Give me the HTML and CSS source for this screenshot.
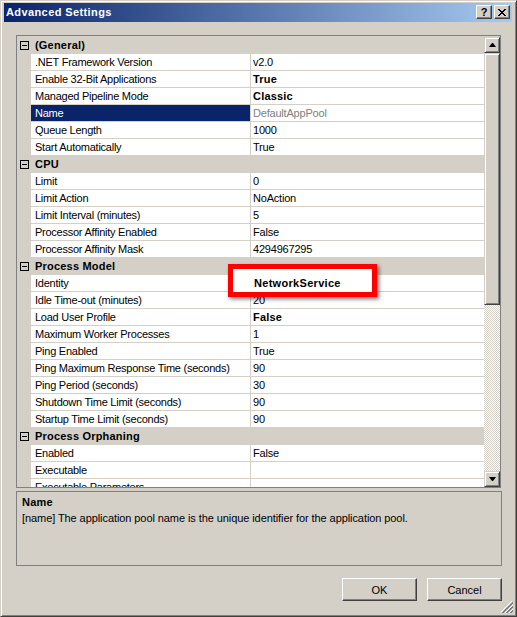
FILE: index.html
```html
<!DOCTYPE html>
<html lang="en">
<head>
    <meta charset="UTF-8">
    <meta name="viewport" content="width=device-width, initial-scale=1.0">
    <title>Advanced Settings</title>
    <link rel="stylesheet" href="styles.css">
</head>
<body>
<div class="window">
    <div class="titlebar">
        <span class="caption">Advanced Settings</span>
        <div class="capbtns">
            <button class="capbtn">?</button>
            <button class="capbtn">
                <svg width="8" height="7" viewBox="0 0 8 7">
                    <path d="M0 0h2v1h-2zM6 0h2v1h-2zM1 1h2v1h-2zM5 1h2v1h-2zM2 2h4v1h-4zM3 3h2v1h-2zM2 4h4v1h-4zM1 5h2v1h-2zM5 5h2v1h-2zM0 6h2v1h-2zM6 6h2v1h-2z" fill="#000"/>
                </svg>
            </button>
        </div>
    </div>

    <div class="client">
        <div class="propgrid">
            <div class="rows">
                <div class="row cat"><div class="gut"><span class="minus"></span></div><div class="name">(General)</div></div>
                <div class="row"><div class="gut"></div><div class="key">.NET Framework Version</div><div class="val">v2.0</div></div>
                <div class="row"><div class="gut"></div><div class="key">Enable 32-Bit Applications</div><div class="val b">True</div></div>
                <div class="row"><div class="gut"></div><div class="key">Managed Pipeline Mode</div><div class="val b">Classic</div></div>
                <div class="row sel"><div class="gut"></div><div class="key">Name</div><div class="val">DefaultAppPool</div></div>
                <div class="row"><div class="gut"></div><div class="key">Queue Length</div><div class="val">1000</div></div>
                <div class="row"><div class="gut"></div><div class="key">Start Automatically</div><div class="val">True</div></div>

                <div class="row cat"><div class="gut"><span class="minus"></span></div><div class="name">CPU</div></div>
                <div class="row"><div class="gut"></div><div class="key">Limit</div><div class="val">0</div></div>
                <div class="row"><div class="gut"></div><div class="key">Limit Action</div><div class="val">NoAction</div></div>
                <div class="row"><div class="gut"></div><div class="key">Limit Interval (minutes)</div><div class="val">5</div></div>
                <div class="row"><div class="gut"></div><div class="key">Processor Affinity Enabled</div><div class="val">False</div></div>
                <div class="row"><div class="gut"></div><div class="key">Processor Affinity Mask</div><div class="val">4294967295</div></div>

                <div class="row cat"><div class="gut"><span class="minus"></span></div><div class="name">Process Model</div></div>
                <!-- the Identity value is shown by the red callout below -->
                <div class="row"><div class="gut"></div><div class="key">Identity</div><div class="val b"></div></div>
                <div class="row"><div class="gut"></div><div class="key">Idle Time-out (minutes)</div><div class="val">20</div></div>
                <div class="row"><div class="gut"></div><div class="key">Load User Profile</div><div class="val b">False</div></div>
                <div class="row"><div class="gut"></div><div class="key">Maximum Worker Processes</div><div class="val">1</div></div>
                <div class="row"><div class="gut"></div><div class="key">Ping Enabled</div><div class="val">True</div></div>
                <div class="row"><div class="gut"></div><div class="key">Ping Maximum Response Time (seconds)</div><div class="val">90</div></div>
                <div class="row"><div class="gut"></div><div class="key">Ping Period (seconds)</div><div class="val">30</div></div>
                <div class="row"><div class="gut"></div><div class="key">Shutdown Time Limit (seconds)</div><div class="val">90</div></div>
                <div class="row"><div class="gut"></div><div class="key">Startup Time Limit (seconds)</div><div class="val">90</div></div>

                <div class="row cat"><div class="gut"><span class="minus"></span></div><div class="name">Process Orphaning</div></div>
                <div class="row"><div class="gut"></div><div class="key">Enabled</div><div class="val">False</div></div>
                <div class="row"><div class="gut"></div><div class="key">Executable</div><div class="val"></div></div>
                <div class="row"><div class="gut"></div><div class="key">Executable Parameters</div><div class="val"></div></div>
            </div>

            <div class="vscroll">
                <div class="sbtn"><span class="arrow-up"></span></div>
                <div class="thumb"></div>
                <div class="track"></div>
                <div class="sbtn"><span class="arrow-down"></span></div>
            </div>
        </div>

        <div class="desc">
            <div class="desc-title">Name</div>
            <div>[name] The application pool name is the unique identifier for the application pool.</div>
        </div>

        <div class="buttons">
            <button class="btn">OK</button>
            <button class="btn">Cancel</button>
        </div>
    </div>

    <!-- red callout drawn over the Identity row -->
    <div class="highlight">NetworkService</div>

    <svg class="grip" width="12" height="12" viewBox="0 0 12 12">
        <path d="M11 0L0 11M12 4L4 12M12 8L8 12" stroke="#fff" shape-rendering="crispEdges"/>
        <path d="M12 1L1 12M12 2L2 12M12 5L5 12M12 6L6 12M12 9L9 12M12 10L10 12" stroke="#808080" shape-rendering="crispEdges"/>
    </svg>
</div>
</body>
</html>
```

FILE: styles.css
```css
body {
    margin: 0;
    background-color: #d4d0c8;
    font-family: "Liberation Sans", Arial, sans-serif;
    font-size: 11px;
    color: #000;
}

.window {
    position: relative;
    width: 517px;
    height: 617px;
    box-sizing: border-box;
    border: 1px solid;
    border-color: #d4d0c8 #404040 #404040 #d4d0c8;
    box-shadow: inset 1px 1px #fff, inset -1px -1px #808080;
    padding: 2px 4px 0 3px;
}

/* title bar */
.titlebar {
    height: 19px;
    display: flex;
    justify-content: space-between;
    background: linear-gradient(to right, #0a246a, #a6caf0);
}

.caption {
    color: #fff;
    font-weight: bold;
    line-height: 19px;
    padding-left: 2px;
    letter-spacing: 0.4px;
}

.capbtns {
    display: flex;
    gap: 2px;
    margin: 2px 2px 0 0;
}

.capbtn {
    width: 16px;
    height: 14px;
    padding: 0;
    background-color: #d4d0c8;
    border: 1px solid;
    border-color: #fff #404040 #404040 #fff;
    box-shadow: inset -1px -1px #808080;
    font-family: "Liberation Sans", Arial, sans-serif;
    font-size: 11px;
    font-weight: bold;
    line-height: 11px;
    display: flex;
    align-items: center;
    justify-content: center;
}

.client {
    padding: 13px 0 0 12px;
}

/* property grid */
.propgrid {
    width: 485px;
    height: 453px;
    box-sizing: border-box;
    border: 1px solid #808080;
    padding-top: 1px;
    display: flex;
    background-color: #d4d0c8;
}

.rows {
    flex: 1;
    overflow: hidden;
}

.row {
    display: grid;
    grid-template-columns: 14px 220px 1fr;
    height: 17px;
    box-sizing: border-box;
    border-bottom: 1px solid #d4d0c8;
    line-height: 16px;
    white-space: nowrap;
}

.gut {
    position: relative;
    background-color: #d4d0c8;
}

.key {
    background-color: #fff;
    padding-left: 4px;
    border-right: 1px solid #d4d0c8;
    overflow: hidden;
    letter-spacing: -0.25px;
}

.val {
    background-color: #fff;
    padding-left: 2px;
    letter-spacing: -0.2px;
}

.val.b {
    font-weight: bold;
    letter-spacing: 0.2px;
}

.cat {
    background-color: #d4d0c8;
}

.cat .name {
    grid-column: 2 / 4;
    padding-left: 4px;
    font-weight: bold;
    letter-spacing: 0.2px;
}

.minus {
    position: absolute;
    left: 3px;
    top: 4px;
    width: 7px;
    height: 7px;
    border: 1px solid #000;
}

.minus::after {
    content: "";
    position: absolute;
    left: 1px;
    top: 3px;
    width: 5px;
    height: 1px;
    background-color: #000;
}

.sel .key {
    background-color: #0a246a;
    color: #fff;
}

.sel .val {
    color: #808080;
}

/* scrollbar */
.vscroll {
    width: 16px;
    display: flex;
    flex-direction: column;
}

.sbtn,
.thumb {
    box-sizing: border-box;
    background-color: #d4d0c8;
    border: 1px solid;
    border-color: #d4d0c8 #404040 #404040 #d4d0c8;
    box-shadow: inset 1px 1px #fff, inset -1px -1px #808080;
}

.sbtn {
    height: 16px;
    display: flex;
    align-items: center;
    justify-content: center;
}

.thumb {
    height: 252px;
}

.track {
    flex: 1;
    background: repeating-conic-gradient(#d4d0c8 0 25%, #fff 0 50%) 0 0 / 2px 2px;
}

.arrow-up,
.arrow-down {
    width: 1px;
    height: 0;
    border-left: 3px solid transparent;
    border-right: 3px solid transparent;
}

.arrow-up {
    border-bottom: 4px solid #000;
}

.arrow-down {
    border-top: 4px solid #000;
}

/* description panel */
.desc {
    margin-top: 3px;
    width: 486px;
    height: 75px;
    box-sizing: border-box;
    border: 1px solid #808080;
    padding: 2px 5px;
    line-height: 16px;
    letter-spacing: -0.08px;
}

.desc-title {
    font-weight: bold;
    letter-spacing: 0.2px;
}

/* dialog buttons */
.buttons {
    margin-top: 12px;
    width: 486px;
    display: flex;
    justify-content: flex-end;
    gap: 10px;
}

.btn {
    width: 75px;
    height: 23px;
    padding: 0;
    background-color: #d4d0c8;
    border: 1px solid;
    border-color: #fff #404040 #404040 #fff;
    box-shadow: inset -1px -1px #808080;
    font-family: "Liberation Sans", Arial, sans-serif;
    font-size: 11px;
    color: #000;
}

.highlight {
    position: absolute;
    left: 227px;
    top: 263px;
    width: 149px;
    height: 33px;
    box-sizing: border-box;
    border: 5px solid #ff0000;
    background-color: #fff;
    box-shadow: 2px 2px 4px rgba(0, 0, 0, 0.55);
    padding: 6px 0 0 21px;
    line-height: 16px;
    font-weight: bold;
    letter-spacing: 0.3px;
}

.grip {
    position: absolute;
    right: 3px;
    bottom: 3px;
}
```
